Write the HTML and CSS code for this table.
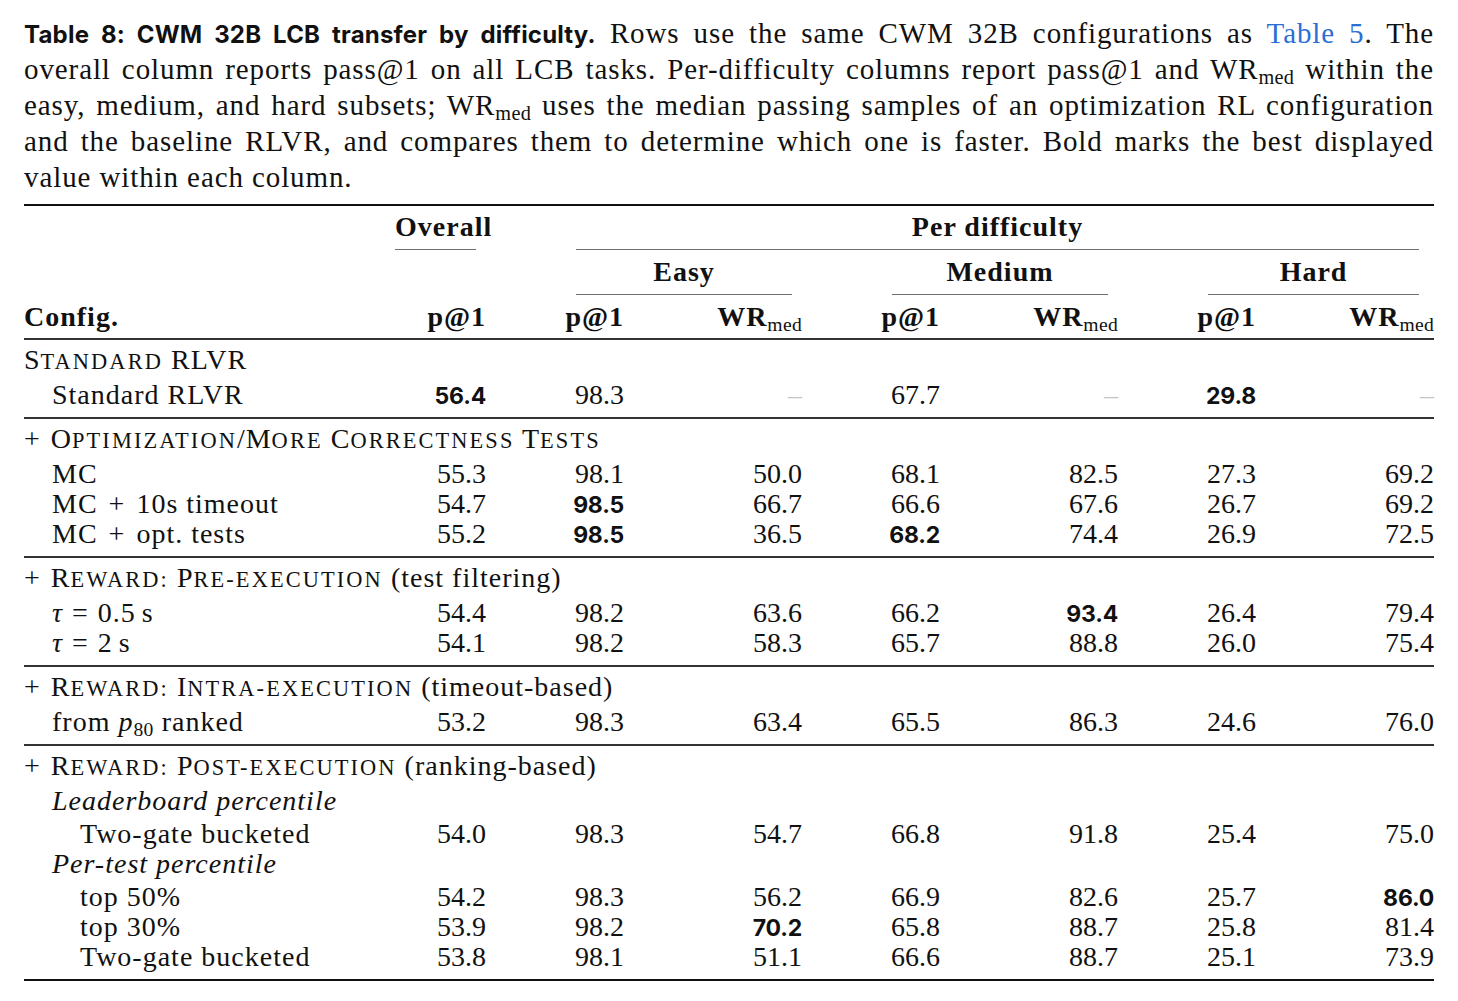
FILE: index.html
```html
<!DOCTYPE html>
<html lang="en">
<head>
<meta charset="utf-8">
<title>Table 8</title>
<link rel="stylesheet" href="styles.css">
</head>
<body>
<div class="caption">
  <span class="ln"><span class="lbl">Table 8: CWM 32B LCB transfer by difficulty.</span> Rows use the same CWM 32B configurations as <a class="ref" href="#">Table 5</a>. The</span>
  <span class="ln">overall column reports pass@1 on all LCB tasks. Per-difficulty columns report pass@1 and WR<span class="sub">med</span> within the</span>
  <span class="ln">easy, medium, and hard subsets; WR<span class="sub">med</span> uses the median passing samples of an optimization RL configuration</span>
  <span class="ln">and the baseline RLVR, and compares them to determine which one is faster. Bold marks the best displayed</span>
  <span class="ln last">value within each column.</span>
</div>

<table class="tbl">
  <colgroup>
    <col class="c-cfg"><col class="c-ov"><col class="c-p"><col class="c-w"><col class="c-p"><col class="c-w"><col class="c-p"><col class="c-w">
  </colgroup>
  <thead>
    <tr class="h1">
      <th></th>
      <th><div class="cm cm-ov">Overall</div></th>
      <th colspan="6"><div class="cm cm-pd">Per difficulty</div></th>
    </tr>
    <tr class="h2">
      <th></th>
      <th></th>
      <th colspan="2"><div class="cm cm-g">Easy</div></th>
      <th colspan="2"><div class="cm cm-g">Medium</div></th>
      <th colspan="2"><div class="cm cm-gl">Hard</div></th>
    </tr>
    <tr class="h3">
      <th class="left">Config.</th>
      <th>p@1</th>
      <th>p@1</th>
      <th>WR<span class="sub">med</span></th>
      <th>p@1</th>
      <th>WR<span class="sub">med</span></th>
      <th>p@1</th>
      <th>WR<span class="sub">med</span></th>
    </tr>
  </thead>

  <tbody>
    <tr class="g"><td colspan="8" class="left txt">S<span class="lc">tandard</span> RLVR</td></tr>
    <tr class="f last">
      <td class="left txt i1">Standard RLVR</td>
      <td><span class="b">56.4</span></td><td>98.3</td><td class="dash">–</td><td>67.7</td><td class="dash">–</td><td><span class="b">29.8</span></td><td class="dash">–</td>
    </tr>
  </tbody>

  <tbody>
    <tr class="g"><td colspan="8" class="left txt"><span class="plus">+</span>O<span class="lc">ptimization</span>/M<span class="lc">ore</span> C<span class="lc">orrectness</span> T<span class="lc">ests</span></td></tr>
    <tr class="f">
      <td class="left txt i1">MC</td>
      <td>55.3</td><td>98.1</td><td>50.0</td><td>68.1</td><td>82.5</td><td>27.3</td><td>69.2</td>
    </tr>
    <tr>
      <td class="left txt i1">MC <span class="op">+</span> 10s timeout</td>
      <td>54.7</td><td><span class="b">98.5</span></td><td>66.7</td><td>66.6</td><td>67.6</td><td>26.7</td><td>69.2</td>
    </tr>
    <tr class="last">
      <td class="left txt i1">MC <span class="op">+</span> opt. tests</td>
      <td>55.2</td><td><span class="b">98.5</span></td><td>36.5</td><td><span class="b">68.2</span></td><td>74.4</td><td>26.9</td><td>72.5</td>
    </tr>
  </tbody>

  <tbody>
    <tr class="g"><td colspan="8" class="left txt"><span class="plus">+</span>R<span class="lc">eward:</span> P<span class="lc">re-execution</span> (test filtering)</td></tr>
    <tr class="f">
      <td class="left txt i1"><i class="m">τ</i><span class="eq">=</span>0.5<span class="unit">s</span></td>
      <td>54.4</td><td>98.2</td><td>63.6</td><td>66.2</td><td><span class="b">93.4</span></td><td>26.4</td><td>79.4</td>
    </tr>
    <tr class="last">
      <td class="left txt i1"><i class="m">τ</i><span class="eq">=</span>2<span class="unit">s</span></td>
      <td>54.1</td><td>98.2</td><td>58.3</td><td>65.7</td><td>88.8</td><td>26.0</td><td>75.4</td>
    </tr>
  </tbody>

  <tbody>
    <tr class="g"><td colspan="8" class="left txt"><span class="plus">+</span>R<span class="lc">eward:</span> I<span class="lc">ntra-execution</span> (timeout-based)</td></tr>
    <tr class="f last">
      <td class="left txt i1">from <i class="m">p</i><span class="sub">80</span> ranked</td>
      <td>53.2</td><td>98.3</td><td>63.4</td><td>65.5</td><td>86.3</td><td>24.6</td><td>76.0</td>
    </tr>
  </tbody>

  <tbody>
    <tr class="g"><td colspan="8" class="left txt"><span class="plus">+</span>R<span class="lc">eward:</span> P<span class="lc">ost-execution</span> (ranking-based)</td></tr>
    <tr class="f"><td colspan="8" class="left txt i1"><em>Leaderboard percentile</em></td></tr>
    <tr class="f2">
      <td class="left txt i2">Two-gate bucketed</td>
      <td>54.0</td><td>98.3</td><td>54.7</td><td>66.8</td><td>91.8</td><td>25.4</td><td>75.0</td>
    </tr>
    <tr><td colspan="8" class="left txt i1"><em>Per-test percentile</em></td></tr>
    <tr class="f2">
      <td class="left txt i2">top 50%</td>
      <td>54.2</td><td>98.3</td><td>56.2</td><td>66.9</td><td>82.6</td><td>25.7</td><td><span class="b">86.0</span></td>
    </tr>
    <tr>
      <td class="left txt i2">top 30%</td>
      <td>53.9</td><td>98.2</td><td><span class="b">70.2</span></td><td>65.8</td><td>88.7</td><td>25.8</td><td>81.4</td>
    </tr>
    <tr class="last">
      <td class="left txt i2">Two-gate bucketed</td>
      <td>53.8</td><td>98.1</td><td>51.1</td><td>66.6</td><td>88.7</td><td>25.1</td><td>73.9</td>
    </tr>
  </tbody>
</table>
</body>
</html>
```

FILE: styles.css
```css
html, body {
  background: #ffffff;
}

body {
  margin: 0;
  padding: 15px 24px 0;
  font-family: "Liberation Serif", "Times New Roman", serif;
  color: #111111;
}

/* ---------- caption ---------- */
.caption {
  width: 1410px;
  font-size: 29px;
  line-height: 36px;
  letter-spacing: 0.9px;
  margin-bottom: 9px;
}

.caption .ln {
  display: block;
  text-align: justify;
  text-align-last: justify;
}

.caption .ln.last {
  text-align: left;
  text-align-last: left;
}

.lbl {
  font-family: Inter, "Liberation Sans", sans-serif;
  font-weight: 700;
  font-size: 24px;
  letter-spacing: 0.2px;
  line-height: 0;
}

.ref {
  color: #2a6fd6;
  text-decoration: none;
}

.sub {
  font-size: 0.7em;
  font-weight: 400;
  vertical-align: -0.25em;
  line-height: 0;
  letter-spacing: 0.3px;
}

/* ---------- table ---------- */
.tbl {
  width: 1410px;
  table-layout: fixed;
  border-collapse: separate;
  border-spacing: 0;
  border-top: 2px solid #111111;
  border-bottom: 2px solid #111111;
  font-size: 28px;
}

.c-cfg { width: 362px; }
.c-ov  { width: 100px; }
.c-p   { width: 138px; }
.c-w   { width: 178px; }

.tbl th,
.tbl td {
  padding: 0;
  line-height: 30px;
  white-space: nowrap;
  text-align: right;
  vertical-align: baseline;
}

.tbl th {
  font-weight: 700;
  letter-spacing: 1px;
}

.tbl th .sub {
  font-weight: 400;
  letter-spacing: 0.3px;
}

.tbl .left {
  text-align: left;
}

.tbl .txt {
  letter-spacing: 1px;
}

/* header rows with trimmed rules */
.cm {
  text-align: center;
  padding: 6px 0 7px;
  border-bottom: 1px solid #707070;
}

.h2 .cm {
  padding: 7px 0 7px;
}

.cm-ov { margin: 0 10px 0 9px; }
.cm-pd { margin: 0 15px 0 90px; }
.cm-g  { margin: 0 10px 0 90px; }
.cm-gl { margin: 0 15px 0 90px; }

.h3 th {
  padding-top: 7px;
  padding-bottom: 6px;
}

/* body sections */
tbody tr:first-child td {
  border-top: 2px solid #333333;
}

tr.g td {
  padding-top: 5px;
}

tr.f td {
  padding-top: 5px;
}

tr.f2 td {
  padding-top: 3px;
}

tr.last td {
  padding-bottom: 7px;
}

.i1 { padding-left: 28px !important; }
.i2 { padding-left: 56px !important; }

/* small caps (Computer Modern style: large small capitals) */
.lc {
  text-transform: uppercase;
  font-size: 0.8em;
  line-height: 0;
  letter-spacing: 2.1px;
}

.plus {
  margin-right: 10px;
}

.op {
  margin: 0 3px;
}

.m {
  font-style: italic;
  line-height: 0;
}

.eq {
  margin: 0 9px;
}

.unit {
  margin-left: 6px;
}

.b {
  font-family: Inter, "Liberation Sans", sans-serif;
  font-weight: 700;
  font-size: 23px;
  letter-spacing: -0.2px;
  line-height: 0;
}

.dash {
  color: #c4c4c4;
}
```
